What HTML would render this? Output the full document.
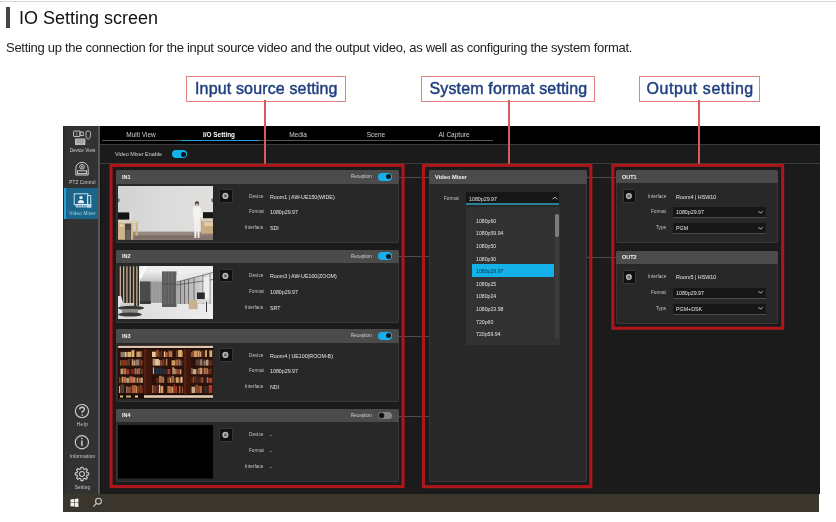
<!DOCTYPE html><html><head><meta charset="utf-8"><style>
*{box-sizing:border-box;margin:0;padding:0}
html,body{width:836px;height:522px;overflow:hidden;background:#fff;font-family:"Liberation Sans",sans-serif}
.a{position:absolute}
.t{white-space:nowrap;will-change:transform}
.co{will-change:transform;border:1.6px solid #e48080;background:#fff;height:26px;color:#1f3f7e;font-size:16px;line-height:24px;white-space:nowrap;padding-left:8px;letter-spacing:0.25px;-webkit-text-stroke:0.45px #1f3f7e}
.rl{width:1.6px;background:#d85a5a}
.pn{background:#282828;border-radius:2px;box-shadow:inset 0 0 0 0.9px #383838}
.ph{background:#4b4b4b;border-radius:2px 2px 0 0}
.hd{color:#f2f2f2;font-weight:bold;font-size:5.5px;line-height:7px}
.lb{color:#c4c4c4;font-size:4.7px;line-height:6px}
.vl{color:#e6e6e6;font-size:5.3px;line-height:6px}
.gb{background:#101010;border:1.4px solid #393939;border-radius:1.5px}
.red{border:3.2px solid #a91519}
.tg{background:#14b2ec;border-radius:5px}
.kn{background:#0d1a22;border-radius:50%}
.sbt{will-change:transform;color:#cfcfcf;font-size:4.6px;line-height:6px;text-align:center;width:35px}
</style></head><body>
<div class="a" style="left:0px;top:1px;width:836px;height:1px;background:#d6d6d6"></div>
<div class="a" style="left:6px;top:7px;width:4px;height:21px;background:#444"></div>
<div class="a t" style="left:19px;top:7px;font-size:18px;line-height:22px;color:#111">IO Setting screen</div>
<div class="a t" style="left:6px;top:39.5px;font-size:13px;line-height:16px;color:#222;letter-spacing:-0.29px">Setting up the connection for the input source video and the output video, as well as configuring the system format.</div>
<div class="a co" style="left:186px;top:75.8px;width:160px;padding-left:8px;letter-spacing:0.15px">Input source setting</div>
<div class="a co" style="left:421px;top:75.8px;width:174px;padding-left:7.5px;letter-spacing:0.15px">System format setting</div>
<div class="a co" style="left:639px;top:75.8px;width:121px;padding-left:6.5px;letter-spacing:0.55px">Output setting</div>
<div class="a" style="left:63.3px;top:126px;width:756.2px;height:386px;background:#1b1b1b"></div>
<div class="a" style="left:63.3px;top:126px;width:34.7px;height:367.6px;background:#323232;box-shadow:inset 1.5px 0 0 #272727"></div>
<div class="a" style="left:97.8px;top:126px;width:2.2px;height:367.6px;background:#565656"></div>
<div class="a" style="left:100px;top:126px;width:719.5px;height:18px;background:#000"></div>
<div class="a" style="left:100px;top:144px;width:719.5px;height:1px;background:#3b3b3b"></div>
<div class="a" style="left:100px;top:145px;width:719.5px;height:18px;background:#1b1b1b"></div>
<div class="a" style="left:100px;top:163px;width:719.5px;height:1px;background:#3b3b3b"></div>
<div class="a t" style="left:101.19999999999999px;top:131px;width:80px;text-align:center;font-size:6.5px;line-height:8px;color:#cfcfcf">Multi View</div>
<div class="a t" style="left:179.39999999999998px;top:131px;width:80px;text-align:center;font-size:6.4px;line-height:8px;color:#fff;font-weight:bold">I/O Setting</div>
<div class="a t" style="left:257.6px;top:131px;width:80px;text-align:center;font-size:6.5px;line-height:8px;color:#cfcfcf">Media</div>
<div class="a t" style="left:335.8px;top:131px;width:80px;text-align:center;font-size:6.5px;line-height:8px;color:#cfcfcf">Scene</div>
<div class="a t" style="left:414.0px;top:131px;width:80px;text-align:center;font-size:6.5px;line-height:8px;color:#cfcfcf">AI Capture</div>
<div class="a" style="left:102.3px;top:140px;width:390.5px;height:1px;background:#5a5a5a"></div>
<div class="a" style="left:180.5px;top:139.5px;width:78.3px;height:1.6px;background:#1fa3dc"></div>
<div class="a t" style="left:115.2px;top:151px;font-size:5.45px;line-height:6px;color:#d4d4d4">Video Mixer Enable</div>
<div class="a" style="left:171.7px;top:150.2px;width:15.2px;height:8.1px;background:#14b2ec;border-radius:5px"></div>
<div class="a" style="left:180.6px;top:151.6px;width:5.3px;height:5.3px;background:#06121a;border-radius:50%"></div>
<div class="a" style="left:100px;top:164px;width:719.5px;height:329.6px;background:#1b1b1b;box-shadow:inset 1px 0 0 #141414"></div>
<div class="a" style="left:63.3px;top:493.6px;width:756.2px;height:18.399999999999977px;background:#3a362d"></div>
<div class="a rl" style="left:264.2px;top:100px;height:66px"></div>
<div class="a rl" style="left:508.2px;top:100px;height:66px"></div>
<div class="a rl" style="left:698.2px;top:100px;height:66px"></div>
<div class="a" style="left:398px;top:176.6px;width:31px;height:1px;background:#4e4e4e"></div>
<div class="a" style="left:398px;top:256.2px;width:31px;height:1px;background:#4e4e4e"></div>
<div class="a" style="left:398px;top:335.9px;width:31px;height:1px;background:#4e4e4e"></div>
<div class="a" style="left:398px;top:415.5px;width:31px;height:1px;background:#4e4e4e"></div>
<div class="a" style="left:586px;top:176.6px;width:31px;height:1px;background:#4e4e4e"></div>
<div class="a" style="left:586px;top:256.8px;width:31px;height:1px;background:#4e4e4e"></div>
<div class="a pn" style="left:115.5px;top:170.0px;width:283.1px;height:73px"></div>
<div class="a ph" style="left:115.5px;top:170.0px;width:283.1px;height:13.5px"></div>
<div class="a t hd" style="left:122.2px;top:173.5px">IN1</div>
<div class="a t" style="left:351.0px;top:174.2px;font-size:4.6px;line-height:6px;color:#d0d0d0">Reception</div>
<div class="a tg" style="left:378.0px;top:172.7px;width:14.4px;height:8.1px"></div>
<div class="a kn" style="left:385.8px;top:174.1px;width:5.2px;height:5.2px;background:#06121a"></div>
<svg class="a" style="left:118.2px;top:186.2px" width="95" height="53.5" viewBox="0 0 95 53.5" preserveAspectRatio="none"><defs>
<linearGradient id="w0" x1="0" y1="0" x2="1" y2="0"><stop offset="0" stop-color="#d2d2d2"/><stop offset="0.5" stop-color="#dcdcdc"/><stop offset="1" stop-color="#e0dfdc"/></linearGradient>
<linearGradient id="f0" x1="0" y1="0" x2="0" y2="1"><stop offset="0" stop-color="#968a84"/><stop offset="1" stop-color="#7e6e64"/></linearGradient>
</defs>
<rect width="95" height="53.5" fill="url(#w0)"/>
<rect x="0" y="45.6" width="95" height="7.9" fill="url(#f0)"/>
<rect x="14" y="47.5" width="60" height="0.6" fill="#a89a90"/>
<rect x="10" y="50.5" width="70" height="0.6" fill="#6e5e54"/>
<!-- left monitor -->
<rect x="0" y="26.4" width="11.6" height="7.2" fill="#141414"/>
<rect x="11.6" y="26" width="1.6" height="8" fill="#ececec"/>
<!-- left desk -->
<rect x="0" y="34.2" width="22" height="2.5" fill="#dcd0b8"/>
<rect x="0" y="36.7" width="7" height="16.8" fill="#cdb48c"/>
<rect x="1.5" y="38.5" width="4" height="2" fill="#e8dcc8"/>
<rect x="7" y="37.5" width="6" height="16" fill="#4c4642"/>
<rect x="7.5" y="44" width="5" height="9" fill="#6a625c"/>
<rect x="13" y="36.7" width="2.2" height="16.8" fill="#d4b88a"/>
<rect x="17.5" y="36.7" width="2.2" height="13" fill="#ccb088"/>
<!-- right monitor -->
<rect x="85" y="26.2" width="10" height="6.3" fill="#161616"/>
<!-- right desk -->
<rect x="81.5" y="32.5" width="13.5" height="2.6" fill="#dccfb8"/>
<rect x="83" y="35.1" width="12" height="12.5" fill="#c8aa80"/>
<rect x="86" y="36" width="9" height="4" fill="#e0ccaa"/>
<!-- person -->
<path d="M75.2 22.3 Q75.2 19.8 78.8 19.6 Q82.6 19.8 83 22.8 L83.8 31 L81.8 31.5 L81.4 52 L79.6 52 L79 34 L78.2 52 L76.4 52 L76.2 31.5 L74.6 30.6 Z" fill="#f4f2ee"/>
<ellipse cx="79" cy="17.7" rx="2.1" ry="2.4" fill="#3a3a3a"/>
<ellipse cx="79" cy="18.8" rx="1.5" ry="1.6" fill="#d8c0a8"/>
<rect x="0" y="12.5" width="1.5" height="3.5" fill="#666"/>
<rect x="93.5" y="12.5" width="1.5" height="3.5" fill="#666"/>
</svg>
<div class="a gb" style="left:219.1px;top:189.2px;width:13.6px;height:13.6px"></div>
<svg class="a" style="left:219.1px;top:189.2px" width="14" height="14"><circle cx="6.4" cy="6.9" r="2.35" fill="#6a6a6a" stroke="#b4b4b4" stroke-width="1.5"/></svg>
<div class="a t lb" style="right:572.5px;top:193.5px">Device</div>
<div class="a t vl" style="left:269.7px;top:193.5px">Room1 | AW-UE150(WIDE)</div>
<div class="a t lb" style="right:572.5px;top:209.25px">Format</div>
<div class="a t vl" style="left:269.7px;top:209.25px">1080p29.97</div>
<div class="a t lb" style="right:572.5px;top:225.0px">Interface</div>
<div class="a t vl" style="left:269.7px;top:225.0px">SDI</div>
<div class="a pn" style="left:115.5px;top:249.6px;width:283.1px;height:73px"></div>
<div class="a ph" style="left:115.5px;top:249.6px;width:283.1px;height:13.5px"></div>
<div class="a t hd" style="left:122.2px;top:253.1px">IN2</div>
<div class="a t" style="left:351.0px;top:253.79999999999998px;font-size:4.6px;line-height:6px;color:#d0d0d0">Reception</div>
<div class="a tg" style="left:378.0px;top:252.29999999999998px;width:14.4px;height:8.1px"></div>
<div class="a kn" style="left:385.8px;top:253.7px;width:5.2px;height:5.2px;background:#06121a"></div>
<svg class="a" style="left:118.2px;top:265.8px" width="95" height="53.5" viewBox="0 0 95 53.5" preserveAspectRatio="none"><defs>
<linearGradient id="g1w" x1="0" y1="0" x2="1" y2="0"><stop offset="0" stop-color="#a8a8a8"/><stop offset="0.6" stop-color="#c8c8c8"/><stop offset="1" stop-color="#ececec"/></linearGradient>
<linearGradient id="g1f" x1="0" y1="0" x2="1" y2="0"><stop offset="0" stop-color="#d8d8d8"/><stop offset="1" stop-color="#eeeeee"/></linearGradient>
<linearGradient id="g1c" x1="0" y1="0" x2="0" y2="1"><stop offset="0" stop-color="#f2f2f2"/><stop offset="1" stop-color="#c4c4c4"/></linearGradient>
</defs>
<rect width="95" height="53.5" fill="#e6e6e6"/>
<!-- ceiling -->
<rect x="20" y="0" width="75" height="15.4" fill="#eeeeee"/>
<path d="M21.8 4 L44 6 L44 15.4 L21.8 15.4 Z" fill="url(#g1c)"/>
<path d="M26 0 L29.5 0 L23 13 L21.8 13 L21.8 9 Z" fill="#fbfbfb"/>
<!-- back wall -->
<rect x="21.8" y="15.4" width="11" height="21.5" fill="#4a4a4a"/>
<rect x="32.8" y="15.4" width="11.2" height="21.5" fill="#979797"/>
<g stroke="#b4b4b4" stroke-width="0.5"><line x1="35" y1="15.4" x2="35" y2="36.9"/><line x1="38" y1="15.4" x2="38" y2="36.9"/><line x1="41" y1="15.4" x2="41" y2="36.9"/></g>
<!-- glass wall -->
<rect x="44" y="5.4" width="14.5" height="35.5" fill="#5e5e5e"/>
<g stroke="#7a7a7a" stroke-width="0.6"><line x1="47" y1="5.4" x2="47" y2="40.9"/><line x1="50.5" y1="5.4" x2="50.5" y2="40.9"/><line x1="54" y1="5.4" x2="54" y2="40.9"/></g>
<line x1="44" y1="18" x2="58.5" y2="18" stroke="#3e3e3e" stroke-width="0.5"/>
<!-- right windows -->
<path d="M58.5 16 L95 6.5 L95 40 L58.5 40 Z" fill="url(#g1w)"/>
<path d="M58.5 9 L95 5 L95 6.5 L58.5 16 Z" fill="#e8e8e8"/>
<g stroke="#2e2e2e" stroke-width="0.55">
<line x1="58.5" y1="16" x2="95" y2="6.5"/><line x1="58.5" y1="19" x2="95" y2="13.5"/>
<line x1="62.5" y1="15" x2="62.5" y2="40"/><line x1="66.5" y1="14" x2="66.5" y2="40"/><line x1="70.5" y1="13" x2="70.5" y2="40"/><line x1="76" y1="11.5" x2="76" y2="40"/><line x1="85" y1="9" x2="85" y2="44"/><line x1="92" y1="7.5" x2="92" y2="44"/>
</g>
<rect x="85.5" y="11" width="6" height="25" fill="#eeeeee"/>
<!-- floor -->
<rect x="0" y="38" width="95" height="15.5" fill="url(#g1f)"/>
<rect x="44" y="38" width="14.5" height="3" fill="#5a5a5a"/>
<rect x="21.8" y="35" width="11" height="3" fill="#3a3a3a"/>
<!-- slats -->
<rect x="0" y="0" width="21" height="40" fill="#2c2824"/>
<g fill="#bfae94"><rect x="1.7" y="0.3" width="1.3" height="40"/><rect x="5" y="0.3" width="1.3" height="40"/><rect x="8.3" y="0.3" width="1.3" height="40"/><rect x="11.6" y="0.3" width="1.3" height="40"/><rect x="14.9" y="0.3" width="1.3" height="40"/><rect x="18.2" y="0.3" width="1.3" height="40"/></g>
<!-- chairs bottom left -->
<path d="M0 30 L3 30 L6 40 L0 42 Z" fill="#e4e4e4"/>
<rect x="2" y="37" width="14" height="4" fill="#d0d0d0"/>
<ellipse cx="13" cy="42" rx="13" ry="2.2" fill="#3a3836"/>
<rect x="4" y="43" width="16" height="4" fill="#8a8a8a"/>
<ellipse cx="12" cy="48.5" rx="12" ry="2" fill="#3a3a3a"/>
<!-- tan chair and monitor -->
<rect x="70.7" y="34.3" width="8.9" height="8.9" fill="#c8b090"/>
<rect x="79" y="26.5" width="7.8" height="6.7" fill="#2a2a2a"/>
<rect x="79" y="33.2" width="12" height="4" fill="#d8d8d8"/>
<rect x="88" y="36" width="0.9" height="10" fill="#222"/>
</svg>
<div class="a gb" style="left:219.1px;top:268.8px;width:13.6px;height:13.6px"></div>
<svg class="a" style="left:219.1px;top:268.8px" width="14" height="14"><circle cx="6.4" cy="6.9" r="2.35" fill="#6a6a6a" stroke="#b4b4b4" stroke-width="1.5"/></svg>
<div class="a t lb" style="right:572.5px;top:273.1px">Device</div>
<div class="a t vl" style="left:269.7px;top:273.1px">Room3 | AW-UE100(ZOOM)</div>
<div class="a t lb" style="right:572.5px;top:288.85px">Format</div>
<div class="a t vl" style="left:269.7px;top:288.85px">1080p29.97</div>
<div class="a t lb" style="right:572.5px;top:304.6px">Interface</div>
<div class="a t vl" style="left:269.7px;top:304.6px">SRT</div>
<div class="a pn" style="left:115.5px;top:329.2px;width:283.1px;height:73px"></div>
<div class="a ph" style="left:115.5px;top:329.2px;width:283.1px;height:13.5px"></div>
<div class="a t hd" style="left:122.2px;top:332.7px">IN3</div>
<div class="a t" style="left:351.0px;top:333.4px;font-size:4.6px;line-height:6px;color:#d0d0d0">Reception</div>
<div class="a tg" style="left:378.0px;top:331.9px;width:14.4px;height:8.1px"></div>
<div class="a kn" style="left:385.8px;top:333.3px;width:5.2px;height:5.2px;background:#06121a"></div>
<svg class="a" style="left:118.2px;top:345.4px" width="95" height="53.5" viewBox="0 0 95 53.5" preserveAspectRatio="none"><rect width="95" height="53.5" fill="#2a120a"/>
<rect x="0" y="0.8" width="95" height="2.2" fill="#d8c4b0"/>
<rect x="0" y="3" width="95" height="1" fill="#1a0a06"/>
<rect x="2.5" y="6.9" width="3.8" height="5.1" fill="#8a7a6a"/>
<rect x="6.5" y="7.0" width="2.0" height="5.0" fill="#e8c89a"/>
<rect x="8.7" y="6.9" width="0.7" height="5.1" fill="#e8c89a"/>
<rect x="9.6" y="6.8" width="3.8" height="5.2" fill="#d8b070"/>
<rect x="13.6" y="5.1" width="2.8" height="6.9" fill="#d8b070"/>
<rect x="18.4" y="6.5" width="3.8" height="5.5" fill="#d09a60"/>
<rect x="22.4" y="6.5" width="0.7" height="5.5" fill="#d8b070"/>
<rect x="23.3" y="5.9" width="0.9" height="6.1" fill="#b0643a"/>
<rect x="2.5" y="15.3" width="0.7" height="5.3" fill="#d8b070"/>
<rect x="3.4" y="15.0" width="1.6" height="5.6" fill="#7a3a20"/>
<rect x="5.2" y="15.1" width="1.6" height="5.5" fill="#a83a28"/>
<rect x="7.0" y="15.2" width="2.8" height="5.4" fill="#7a3a20"/>
<rect x="10.0" y="13.9" width="2.0" height="6.7" fill="#5a3a30"/>
<rect x="13.7" y="14.1" width="1.6" height="6.5" fill="#d09a60"/>
<rect x="15.5" y="15.6" width="1.6" height="5.0" fill="#c8a888"/>
<rect x="17.3" y="14.5" width="3.8" height="6.1" fill="#8a7a6a"/>
<rect x="21.3" y="14.2" width="1.2" height="6.4" fill="#a83a28"/>
<rect x="22.8" y="14.7" width="1.9" height="5.9" fill="#7a3a20"/>
<rect x="2.5" y="23.6" width="2.8" height="5.6" fill="#b89a80"/>
<rect x="5.5" y="23.4" width="2.8" height="5.8" fill="#c06a40"/>
<rect x="8.5" y="24.3" width="2.8" height="4.9" fill="#a83a28"/>
<rect x="12.7" y="24.0" width="3.8" height="5.2" fill="#6a2a1a"/>
<rect x="16.7" y="23.3" width="1.6" height="5.9" fill="#c06a40"/>
<rect x="18.5" y="23.7" width="1.6" height="5.5" fill="#8a7a6a"/>
<rect x="20.3" y="23.1" width="1.6" height="6.1" fill="#c06a40"/>
<rect x="22.1" y="22.4" width="1.2" height="6.8" fill="#3a2a28"/>
<rect x="23.6" y="23.9" width="0.9" height="5.3" fill="#b0643a"/>
<rect x="1.0" y="31.9" width="0.9" height="5.9" fill="#8a4a2a"/>
<rect x="2.2" y="32.9" width="1.2" height="4.9" fill="#6a2a1a"/>
<rect x="3.7" y="31.7" width="1.2" height="6.1" fill="#d8b070"/>
<rect x="5.2" y="31.8" width="2.8" height="6.0" fill="#c06a40"/>
<rect x="8.2" y="32.8" width="2.8" height="5.0" fill="#b89a80"/>
<rect x="11.2" y="31.5" width="3.8" height="6.3" fill="#c06a40"/>
<rect x="15.2" y="32.1" width="1.6" height="5.7" fill="#c8a888"/>
<rect x="17.0" y="32.5" width="1.6" height="5.3" fill="#8a4a2a"/>
<rect x="18.8" y="32.7" width="1.6" height="5.1" fill="#d09a60"/>
<rect x="20.6" y="31.7" width="0.7" height="6.1" fill="#8a4a2a"/>
<rect x="21.5" y="32.8" width="1.2" height="5.0" fill="#d8b070"/>
<rect x="23.0" y="32.6" width="1.8" height="5.2" fill="#c8a888"/>
<rect x="1.0" y="41.0" width="1.2" height="7.0" fill="#d8b070"/>
<rect x="2.5" y="39.4" width="3.8" height="8.6" fill="#5a3a30"/>
<rect x="8.3" y="41.3" width="1.2" height="6.7" fill="#b89a80"/>
<rect x="9.8" y="41.9" width="0.9" height="6.1" fill="#8a7a6a"/>
<rect x="11.0" y="41.6" width="2.0" height="6.4" fill="#a83a28"/>
<rect x="13.2" y="40.6" width="0.7" height="7.4" fill="#7a3a20"/>
<rect x="14.1" y="40.2" width="3.8" height="7.8" fill="#b0643a"/>
<rect x="18.1" y="41.1" width="1.2" height="6.9" fill="#d09a60"/>
<rect x="19.6" y="40.7" width="2.0" height="7.3" fill="#7a3a20"/>
<rect x="21.8" y="39.9" width="2.0" height="8.1" fill="#7a3a20"/>
<rect x="24.0" y="41.4" width="0.8" height="6.6" fill="#7a3a20"/>
<rect x="34.0" y="6.7" width="3.8" height="5.3" fill="#e8c89a"/>
<rect x="38.0" y="5.0" width="2.8" height="7.0" fill="#8a4a2a"/>
<rect x="41.0" y="6.7" width="1.6" height="5.3" fill="#6a2a1a"/>
<rect x="42.8" y="5.4" width="1.2" height="6.6" fill="#5a3a30"/>
<rect x="45.8" y="6.4" width="1.6" height="5.6" fill="#e8c89a"/>
<rect x="47.6" y="7.1" width="2.0" height="4.9" fill="#c06a40"/>
<rect x="49.8" y="5.7" width="1.2" height="6.3" fill="#7a3a20"/>
<rect x="51.3" y="5.5" width="0.7" height="6.5" fill="#c8a888"/>
<rect x="52.2" y="6.2" width="1.6" height="5.8" fill="#d09a60"/>
<rect x="54.0" y="5.1" width="0.7" height="6.9" fill="#7a3a20"/>
<rect x="57.9" y="5.4" width="2.0" height="6.6" fill="#5a3a30"/>
<rect x="60.1" y="5.0" width="3.8" height="7.0" fill="#d8b070"/>
<rect x="64.1" y="5.9" width="0.7" height="6.1" fill="#d09a60"/>
<rect x="34.0" y="13.7" width="0.7" height="6.9" fill="#7a3a20"/>
<rect x="34.9" y="13.7" width="2.0" height="6.9" fill="#b89a80"/>
<rect x="37.1" y="14.0" width="3.8" height="6.6" fill="#e8c89a"/>
<rect x="41.1" y="15.1" width="1.2" height="5.5" fill="#e8c89a"/>
<rect x="42.6" y="15.2" width="2.0" height="5.4" fill="#a83a28"/>
<rect x="44.8" y="13.8" width="0.9" height="6.8" fill="#8a4a2a"/>
<rect x="46.0" y="14.5" width="1.6" height="6.1" fill="#3a2a28"/>
<rect x="47.8" y="13.8" width="1.6" height="6.8" fill="#c06a40"/>
<rect x="53.6" y="15.3" width="3.8" height="5.3" fill="#d09a60"/>
<rect x="57.6" y="14.5" width="2.8" height="6.1" fill="#b0643a"/>
<rect x="60.6" y="14.5" width="2.0" height="6.1" fill="#8a7a6a"/>
<rect x="62.8" y="15.6" width="0.7" height="5.0" fill="#8a7a6a"/>
<rect x="63.7" y="15.5" width="0.7" height="5.1" fill="#7a3a20"/>
<rect x="34.9" y="22.3" width="1.2" height="6.9" fill="#d8b070"/>
<rect x="36.4" y="23.7" width="0.9" height="5.5" fill="#243040"/>
<rect x="37.6" y="23.2" width="3.8" height="6.0" fill="#243040"/>
<rect x="41.6" y="22.4" width="2.0" height="6.8" fill="#243040"/>
<rect x="43.8" y="23.4" width="0.9" height="5.8" fill="#243040"/>
<rect x="45.0" y="23.6" width="1.6" height="5.6" fill="#243040"/>
<rect x="46.8" y="23.9" width="1.6" height="5.3" fill="#243040"/>
<rect x="48.6" y="24.0" width="0.7" height="5.2" fill="#243040"/>
<rect x="49.5" y="24.0" width="2.8" height="5.2" fill="#a83a28"/>
<rect x="54.3" y="22.2" width="1.6" height="7.0" fill="#d09a60"/>
<rect x="56.1" y="23.4" width="0.9" height="5.8" fill="#b89a80"/>
<rect x="57.3" y="23.9" width="1.2" height="5.3" fill="#c8a888"/>
<rect x="58.8" y="24.3" width="2.8" height="4.9" fill="#a83a28"/>
<rect x="61.8" y="24.3" width="1.6" height="4.9" fill="#b89a80"/>
<rect x="38.0" y="32.8" width="1.2" height="5.0" fill="#6a2a1a"/>
<rect x="39.5" y="32.6" width="1.2" height="5.2" fill="#7a3a20"/>
<rect x="41.0" y="30.9" width="2.8" height="6.9" fill="#c06a40"/>
<rect x="44.0" y="31.7" width="2.0" height="6.1" fill="#8a7a6a"/>
<rect x="46.2" y="32.8" width="0.7" height="5.0" fill="#6a2a1a"/>
<rect x="48.9" y="32.4" width="0.7" height="5.4" fill="#7a3a20"/>
<rect x="49.8" y="32.3" width="0.9" height="5.5" fill="#b0643a"/>
<rect x="51.0" y="30.8" width="0.7" height="7.0" fill="#a83a28"/>
<rect x="51.9" y="32.6" width="1.2" height="5.2" fill="#d8b070"/>
<rect x="53.4" y="30.9" width="0.9" height="6.9" fill="#b0643a"/>
<rect x="54.6" y="30.9" width="0.9" height="6.9" fill="#e8c89a"/>
<rect x="55.8" y="32.5" width="2.0" height="5.3" fill="#7a3a20"/>
<rect x="58.0" y="32.3" width="2.8" height="5.5" fill="#d09a60"/>
<rect x="61.0" y="32.9" width="1.2" height="4.9" fill="#8a4a2a"/>
<rect x="62.5" y="31.8" width="2.0" height="6.0" fill="#e8c89a"/>
<rect x="34.0" y="40.3" width="1.6" height="7.7" fill="#b0643a"/>
<rect x="35.8" y="40.6" width="2.8" height="7.4" fill="#5a3a30"/>
<rect x="38.8" y="40.2" width="2.0" height="7.8" fill="#6a2a1a"/>
<rect x="41.0" y="39.8" width="1.2" height="8.2" fill="#e8c89a"/>
<rect x="42.5" y="40.9" width="2.8" height="7.1" fill="#d09a60"/>
<rect x="49.4" y="41.0" width="2.8" height="7.0" fill="#c06a40"/>
<rect x="52.4" y="41.4" width="1.2" height="6.6" fill="#d8b070"/>
<rect x="53.9" y="41.6" width="1.6" height="6.4" fill="#d09a60"/>
<rect x="55.7" y="39.5" width="1.2" height="8.5" fill="#a83a28"/>
<rect x="57.2" y="41.3" width="2.0" height="6.7" fill="#a83a28"/>
<rect x="60.9" y="40.8" width="1.6" height="7.2" fill="#b0643a"/>
<rect x="63.9" y="41.7" width="0.9" height="6.3" fill="#c06a40"/>
<rect x="73.5" y="7.1" width="0.7" height="4.9" fill="#c8a888"/>
<rect x="74.4" y="5.9" width="0.9" height="6.1" fill="#b0643a"/>
<rect x="75.6" y="5.7" width="3.8" height="6.3" fill="#d09a60"/>
<rect x="79.6" y="5.5" width="2.0" height="6.5" fill="#c8a888"/>
<rect x="81.8" y="6.5" width="1.6" height="5.5" fill="#d09a60"/>
<rect x="83.6" y="5.4" width="0.9" height="6.6" fill="#8a4a2a"/>
<rect x="84.8" y="6.2" width="2.0" height="5.8" fill="#3a2a28"/>
<rect x="87.0" y="5.2" width="2.0" height="6.8" fill="#d09a60"/>
<rect x="91.4" y="5.4" width="2.8" height="6.6" fill="#d8b070"/>
<rect x="77.7" y="14.5" width="3.8" height="6.1" fill="#5a3a30"/>
<rect x="81.7" y="14.3" width="2.8" height="6.3" fill="#8a7a6a"/>
<rect x="84.7" y="14.0" width="0.7" height="6.6" fill="#5a3a30"/>
<rect x="85.6" y="15.5" width="2.0" height="5.1" fill="#8a7a6a"/>
<rect x="87.8" y="14.7" width="2.8" height="5.9" fill="#b89a80"/>
<rect x="90.8" y="15.2" width="3.4" height="5.4" fill="#6a2a1a"/>
<rect x="73.5" y="22.9" width="0.9" height="6.3" fill="#b89a80"/>
<rect x="74.7" y="24.1" width="3.8" height="5.1" fill="#c8a888"/>
<rect x="78.7" y="24.2" width="1.2" height="5.0" fill="#7a3a20"/>
<rect x="80.2" y="23.0" width="0.9" height="6.2" fill="#b0643a"/>
<rect x="81.4" y="22.8" width="2.8" height="6.4" fill="#b89a80"/>
<rect x="84.4" y="23.3" width="0.9" height="5.9" fill="#8a4a2a"/>
<rect x="85.6" y="22.8" width="2.8" height="6.4" fill="#b0643a"/>
<rect x="88.6" y="23.2" width="1.2" height="6.0" fill="#b89a80"/>
<rect x="90.1" y="24.1" width="1.6" height="5.1" fill="#7a3a20"/>
<rect x="91.9" y="22.2" width="0.9" height="7.0" fill="#6a2a1a"/>
<rect x="93.1" y="23.3" width="0.7" height="5.9" fill="#6a2a1a"/>
<rect x="73.5" y="32.1" width="1.6" height="5.7" fill="#6a2a1a"/>
<rect x="75.3" y="31.7" width="0.9" height="6.1" fill="#b0643a"/>
<rect x="76.5" y="30.9" width="2.0" height="6.9" fill="#6a2a1a"/>
<rect x="78.7" y="31.8" width="3.8" height="6.0" fill="#3a2a28"/>
<rect x="82.7" y="32.4" width="2.8" height="5.4" fill="#a83a28"/>
<rect x="87.5" y="32.0" width="1.6" height="5.8" fill="#3a2a28"/>
<rect x="89.3" y="32.2" width="0.9" height="5.6" fill="#c8a888"/>
<rect x="90.5" y="32.9" width="3.8" height="4.9" fill="#a83a28"/>
<rect x="73.5" y="41.7" width="3.8" height="6.3" fill="#c8a888"/>
<rect x="77.5" y="39.7" width="2.8" height="8.3" fill="#8a4a2a"/>
<rect x="80.5" y="41.0" width="1.2" height="7.0" fill="#b0643a"/>
<rect x="82.0" y="41.0" width="2.0" height="7.0" fill="#b0643a"/>
<rect x="85.7" y="41.2" width="3.8" height="6.8" fill="#3a2a28"/>
<rect x="89.7" y="40.9" width="0.9" height="7.1" fill="#6a2a1a"/>
<rect x="90.9" y="40.0" width="3.3" height="8.0" fill="#a83a28"/>
<rect x="25.5" y="4" width="8" height="46" fill="#3e160c"/>
<rect x="26.5" y="4" width="1.2" height="46" fill="#6a2a18"/>
<rect x="65.5" y="4" width="7.5" height="46" fill="#3e160c"/>
<rect x="66.5" y="4" width="1.2" height="46" fill="#6a2a18"/>
<rect x="0" y="49" width="95" height="4.5" fill="#1e0c06"/>
<rect x="26" y="50.2" width="69" height="2.6" fill="#e0ccb8"/>
<rect x="2" y="50.5" width="3" height="2" fill="#d8b890"/><rect x="8" y="50.5" width="5" height="2" fill="#c8a880"/><rect x="17" y="50.5" width="3" height="2" fill="#e8d0b0"/></svg>
<div class="a gb" style="left:219.1px;top:348.4px;width:13.6px;height:13.6px"></div>
<svg class="a" style="left:219.1px;top:348.4px" width="14" height="14"><circle cx="6.4" cy="6.9" r="2.35" fill="#6a6a6a" stroke="#b4b4b4" stroke-width="1.5"/></svg>
<div class="a t lb" style="right:572.5px;top:352.7px">Device</div>
<div class="a t vl" style="left:269.7px;top:352.7px">Room4 | UE100(ROOM-B)</div>
<div class="a t lb" style="right:572.5px;top:368.45px">Format</div>
<div class="a t vl" style="left:269.7px;top:368.45px">1080p29.97</div>
<div class="a t lb" style="right:572.5px;top:384.2px">Interface</div>
<div class="a t vl" style="left:269.7px;top:384.2px">NDI</div>
<div class="a pn" style="left:115.5px;top:408.79999999999995px;width:283.1px;height:73px"></div>
<div class="a ph" style="left:115.5px;top:408.79999999999995px;width:283.1px;height:13.5px"></div>
<div class="a t hd" style="left:122.2px;top:412.29999999999995px">IN4</div>
<div class="a t" style="left:351.0px;top:412.99999999999994px;font-size:4.6px;line-height:6px;color:#d0d0d0">Reception</div>
<div class="a" style="left:377.7px;top:411.69999999999993px;width:14.6px;height:7.6px;background:#858585;border-radius:5px"></div>
<div class="a kn" style="left:378.6px;top:412.49999999999994px;width:5.6px;height:5.6px;background:#0e0e0e;box-shadow:0 0 0 0.5px #555"></div>
<svg class="a" style="left:118.2px;top:424.99999999999994px" width="95" height="53.5" viewBox="0 0 95 53.5" preserveAspectRatio="none"><rect width="95" height="53.5" fill="#000"/></svg>
<div class="a gb" style="left:219.1px;top:427.99999999999994px;width:13.6px;height:13.6px"></div>
<svg class="a" style="left:219.1px;top:427.99999999999994px" width="14" height="14"><circle cx="6.4" cy="6.9" r="2.35" fill="#6a6a6a" stroke="#b4b4b4" stroke-width="1.5"/></svg>
<div class="a t lb" style="right:572.5px;top:432.29999999999995px">Device</div>
<div class="a t vl" style="left:269.7px;top:432.29999999999995px">-</div>
<div class="a t lb" style="right:572.5px;top:448.04999999999995px">Format</div>
<div class="a t vl" style="left:269.7px;top:448.04999999999995px">-</div>
<div class="a t lb" style="right:572.5px;top:463.79999999999995px">Interface</div>
<div class="a t vl" style="left:269.7px;top:463.79999999999995px">-</div>
<svg class="a" style="left:0;top:0" width="836" height="522"><rect x="111.05" y="165.35" width="292.00" height="321.20" fill="none" stroke="#ad161a" stroke-width="3.1"/><rect x="423.45" y="165.35" width="167.40" height="321.30" fill="none" stroke="#ad161a" stroke-width="3.1"/><rect x="612.85" y="165.35" width="169.80" height="162.90" fill="none" stroke="#ad161a" stroke-width="3.1"/></svg>
<div class="a pn" style="left:428.7px;top:170px;width:158px;height:311.6px"></div>
<div class="a ph" style="left:428.7px;top:170px;width:158px;height:14px"></div>
<div class="a t hd" style="left:434.7px;top:173.8px;font-size:5.7px">Video Mixer</div>
<div class="a t lb" style="right:376.8px;top:195.6px">Format</div>
<div class="a" style="left:466.3px;top:192.2px;width:93.2px;height:11px;background:#171717"></div>
<div class="a" style="left:466.3px;top:202.6px;width:93.2px;height:2.6px;background:#2a8296"></div>
<div class="a t vl" style="left:469px;top:195.5px;font-size:5.3px">1080p29.97</div>
<svg class="a" style="left:551px;top:195px" width="8" height="6"><path d="M1.5 4.3 L3.8 2 L6.1 4.3" stroke="#cfcfcf" stroke-width="0.9" fill="none"/></svg>
<div class="a" style="left:465.5px;top:207px;width:94px;height:138px;background:#323232;border-radius:1px"></div>
<div class="a" style="left:472px;top:264.1px;width:82px;height:12.6px;background:#15b2ea"></div>
<div class="a t" style="left:475.5px;top:217.7px;font-size:5.2px;line-height:6px;color:#e0e0e0">1080p60</div>
<div class="a t" style="left:475.5px;top:230.29999999999998px;font-size:5.2px;line-height:6px;color:#e0e0e0">1080p59.94</div>
<div class="a t" style="left:475.5px;top:242.89999999999998px;font-size:5.2px;line-height:6px;color:#e0e0e0">1080p50</div>
<div class="a t" style="left:475.5px;top:255.5px;font-size:5.2px;line-height:6px;color:#e0e0e0">1080p30</div>
<div class="a t" style="left:475.5px;top:268.09999999999997px;font-size:5.2px;line-height:6px;color:#0c2a3a">1080p29.97</div>
<div class="a t" style="left:475.5px;top:280.7px;font-size:5.2px;line-height:6px;color:#e0e0e0">1080p25</div>
<div class="a t" style="left:475.5px;top:293.29999999999995px;font-size:5.2px;line-height:6px;color:#e0e0e0">1080p24</div>
<div class="a t" style="left:475.5px;top:305.9px;font-size:5.2px;line-height:6px;color:#e0e0e0">1080p23.98</div>
<div class="a t" style="left:475.5px;top:318.5px;font-size:5.2px;line-height:6px;color:#e0e0e0">720p60</div>
<div class="a t" style="left:475.5px;top:331.09999999999997px;font-size:5.2px;line-height:6px;color:#e0e0e0">720p59.94</div>
<div class="a" style="left:555.2px;top:213.6px;width:3.5px;height:125.5px;background:#3c3c3c;border-radius:1.5px"></div>
<div class="a" style="left:555.3px;top:213.8px;width:3.3px;height:23.5px;background:#7c7c7c;border-radius:1.5px"></div>
<div class="a pn" style="left:616.2px;top:170.3px;width:162.1px;height:73.1px"></div>
<div class="a ph" style="left:616.2px;top:170.3px;width:162.1px;height:13px"></div>
<div class="a t hd" style="left:622.2px;top:173.60000000000002px">OUT1</div>
<div class="a gb" style="left:622.7px;top:189.10000000000002px;width:13.1px;height:13.8px"></div>
<svg class="a" style="left:622.7px;top:189.10000000000002px" width="14" height="14"><circle cx="5.9" cy="7.1" r="2.3" fill="#6a6a6a" stroke="#b4b4b4" stroke-width="1.5"/></svg>
<div class="a t lb" style="right:169.79999999999995px;top:193.60000000000002px">Interface</div>
<div class="a t vl" style="left:675.7px;top:193.60000000000002px;font-size:5.4px">Room4 | HSW10</div>
<div class="a t lb" style="right:169.79999999999995px;top:209.0px">Format</div>
<div class="a" style="left:673.1px;top:206.8px;width:92.5px;height:10px;background:#171717"></div>
<div class="a" style="left:673.1px;top:216.8px;width:92.5px;height:0.8px;background:#4a4a4a"></div>
<div class="a t vl" style="left:675.7px;top:209.0px">1080p29.97</div>
<svg class="a" style="left:757.2px;top:209.5px" width="7" height="5"><path d="M1.5 1.2 L3.5 3.2 L5.5 1.2" stroke="#cfcfcf" stroke-width="0.9" fill="none"/></svg>
<div class="a t lb" style="right:169.79999999999995px;top:225.1px">Type</div>
<div class="a" style="left:673.1px;top:222.9px;width:92.5px;height:10px;background:#171717"></div>
<div class="a" style="left:673.1px;top:232.9px;width:92.5px;height:0.8px;background:#4a4a4a"></div>
<div class="a t vl" style="left:675.7px;top:225.1px">PGM</div>
<svg class="a" style="left:757.2px;top:225.6px" width="7" height="5"><path d="M1.5 1.2 L3.5 3.2 L5.5 1.2" stroke="#cfcfcf" stroke-width="0.9" fill="none"/></svg>
<div class="a pn" style="left:616.2px;top:251.10000000000002px;width:162.1px;height:73.1px"></div>
<div class="a ph" style="left:616.2px;top:251.10000000000002px;width:162.1px;height:13px"></div>
<div class="a t hd" style="left:622.2px;top:254.40000000000003px">OUT2</div>
<div class="a gb" style="left:622.7px;top:269.90000000000003px;width:13.1px;height:13.8px"></div>
<svg class="a" style="left:622.7px;top:269.90000000000003px" width="14" height="14"><circle cx="5.9" cy="7.1" r="2.3" fill="#6a6a6a" stroke="#b4b4b4" stroke-width="1.5"/></svg>
<div class="a t lb" style="right:169.79999999999995px;top:274.40000000000003px">Interface</div>
<div class="a t vl" style="left:675.7px;top:274.40000000000003px;font-size:5.4px">Room5 | HSW10</div>
<div class="a t lb" style="right:169.79999999999995px;top:289.8px">Format</div>
<div class="a" style="left:673.1px;top:287.6px;width:92.5px;height:10px;background:#171717"></div>
<div class="a" style="left:673.1px;top:297.6px;width:92.5px;height:0.8px;background:#4a4a4a"></div>
<div class="a t vl" style="left:675.7px;top:289.8px">1080p29.97</div>
<svg class="a" style="left:757.2px;top:290.3px" width="7" height="5"><path d="M1.5 1.2 L3.5 3.2 L5.5 1.2" stroke="#cfcfcf" stroke-width="0.9" fill="none"/></svg>
<div class="a t lb" style="right:169.79999999999995px;top:305.90000000000003px">Type</div>
<div class="a" style="left:673.1px;top:303.70000000000005px;width:92.5px;height:10px;background:#171717"></div>
<div class="a" style="left:673.1px;top:313.70000000000005px;width:92.5px;height:0.8px;background:#4a4a4a"></div>
<div class="a t vl" style="left:675.7px;top:305.90000000000003px">PGM+DSK</div>
<svg class="a" style="left:757.2px;top:306.40000000000003px" width="7" height="5"><path d="M1.5 1.2 L3.5 3.2 L5.5 1.2" stroke="#cfcfcf" stroke-width="0.9" fill="none"/></svg>
<div class="a" style="left:63.8px;top:188px;width:34px;height:31.2px;background:#19668a"></div>
<div class="a" style="left:63.8px;top:188px;width:2.7px;height:31.2px;background:#2aa0d8"></div>
<div class="a t sbt" style="left:64.92500000000001px;top:148.3px;letter-spacing:0.05px;">Device View</div>
<div class="a t sbt" style="left:64.97500000000001px;top:179.5px;letter-spacing:0.15px;">PTZ Control</div>
<div class="a t sbt" style="left:65.0px;top:211.2px;letter-spacing:0.2px;color:#a9d3e6;">Video Mixer</div>
<div class="a t sbt" style="left:65.15px;top:422.4px;letter-spacing:0.5px;">Help</div>
<div class="a t sbt" style="left:65.01px;top:453.9px;letter-spacing:0.22px;">Information</div>
<div class="a t sbt" style="left:65.0px;top:484.6px;letter-spacing:0.2px;">Setting</div>
<svg class="a" style="left:0;top:0" width="836" height="522" viewBox="0 0 836 522">
<g fill="none" stroke="#c8c8c8" stroke-width="0.9">
  <!-- device view -->
  <rect x="73.6" y="131" width="6.4" height="5.5" rx="0.4"/>
  <rect x="80" y="132" width="3.2" height="3.6"/>
  <line x1="76.8" y1="131.3" x2="76.8" y2="136.2" stroke-width="0.5"/>
  <path d="M86 132.4 Q86 131 88.2 131 Q90.5 131 90.5 132.4 L90.5 135.5 Q90.5 138 88.2 139.6 Q86 138 86 135.5 Z"/>

</g>
<rect x="75" y="138.5" width="10.4" height="6.6" fill="#bdbdbd" rx="0.5"/>
<g stroke="#7a7a7a" stroke-width="0.45">
  <line x1="76" y1="140.3" x2="84.4" y2="140.3"/>
  <line x1="76" y1="142.3" x2="84.4" y2="142.3"/>
  <line x1="78" y1="139.3" x2="78" y2="144.3"/>
  <line x1="80.2" y1="139.3" x2="80.2" y2="144.3"/>
  <line x1="82.4" y1="139.3" x2="82.4" y2="144.3"/>
</g>
<!-- PTZ -->
<g fill="none" stroke="#cfcfcf" stroke-width="1">
  <path d="M75.8 175 L75.8 168.5 A6.2 6.2 0 0 1 88.2 168.5 L88.2 175 Z"/>
  <circle cx="82" cy="166.8" r="2.3"/>
  <rect x="77.4" y="170.8" width="9.2" height="2.8"/>
</g>
<circle cx="82" cy="166.8" r="0.9" fill="#cfcfcf"/>
<!-- video mixer -->
<g fill="none" stroke="#d6ecf5" stroke-width="0.9">
  <rect x="74.2" y="193.8" width="13.6" height="10.8"/>
  <rect x="87.6" y="195.6" width="3.2" height="11.3"/>
  <rect x="76.2" y="204.6" width="14.6" height="2.3"/>
</g>
<circle cx="81" cy="197.6" r="1.7" fill="#e2f2f8"/>
<path d="M77.9 203.2 Q77.9 199.9 81 199.9 Q84.1 199.9 84.1 203.2 Z" fill="#e2f2f8"/>
<rect x="77.2" y="205.2" width="13" height="1.2" fill="#d6ecf5"/>
<g fill="#1a6888">
  <rect x="78" y="205.4" width="1.4" height="0.9"/><rect x="80.5" y="205.4" width="1.4" height="0.9"/><rect x="83" y="205.4" width="1.4" height="0.9"/><rect x="85.5" y="205.4" width="1.4" height="0.9"/>
  <rect x="88.6" y="197" width="1.2" height="1.3"/><rect x="88.6" y="199.6" width="1.2" height="1.3"/><rect x="88.6" y="202.2" width="1.2" height="1.3"/>
</g>
<!-- help -->
<g fill="none" stroke="#cdcdcd" stroke-width="1.15">
  <circle cx="82" cy="411.1" r="6.6"/>
  <path d="M79.7 409.5 Q79.7 407.2 82 407.2 Q84.4 407.2 84.4 409.3 Q84.4 410.9 82.2 411.8 L82.2 413.1" stroke-width="1.4"/>
</g>
<circle cx="82.2" cy="415.1" r="0.8" fill="#cdcdcd"/>
<!-- info -->
<g fill="none" stroke="#cdcdcd" stroke-width="1.15">
  <circle cx="81.9" cy="442.2" r="6.6"/>
  <line x1="81.9" y1="440.5" x2="81.9" y2="446.1" stroke-width="1.5"/>
</g>
<circle cx="81.9" cy="438.5" r="0.85" fill="#cdcdcd"/>
<!-- setting gear -->
<g transform="translate(82 473.9)">
  <path fill="none" stroke="#d0d0d0" stroke-width="1.05" stroke-linejoin="round" d="M-1.06 -6.72 L1.06 -6.72 L1.24 -4.84 L2.55 -4.30 L4.00 -5.50 L5.50 -4.00 L4.30 -2.55 L4.84 -1.24 L6.72 -1.06 L6.72 1.06 L4.84 1.24 L4.30 2.55 L5.50 4.00 L4.00 5.50 L2.55 4.30 L1.24 4.84 L1.06 6.72 L-1.06 6.72 L-1.24 4.84 L-2.55 4.30 L-4.00 5.50 L-5.50 4.00 L-4.30 2.55 L-4.84 1.24 L-6.72 1.06 L-6.72 -1.06 L-4.84 -1.24 L-4.30 -2.55 L-5.50 -4.00 L-4.00 -5.50 L-2.55 -4.30 L-1.24 -4.84 Z"/>
  <circle r="2.5" fill="none" stroke="#d0d0d0" stroke-width="1.05"/>
</g>
<!-- windows logo -->
<path d="M70.5 499.5 L74 499.0 L74 502.5 L70.5 502.5 Z M74.6 498.9 L78.4 498.5 L78.4 502.5 L74.6 502.5 Z M70.5 503.1 L74 503.1 L74 506.6 L70.5 506.2 Z M74.6 503.1 L78.4 503.1 L78.4 507.1 L74.6 506.7 Z" fill="#f2f2f2"/>
<!-- search -->
<g fill="none" stroke="#c8c8c8" stroke-width="1.1">
  <circle cx="98.5" cy="501.2" r="2.9"/>
  <line x1="96.4" y1="503.4" x2="93.4" y2="506.6" stroke-width="1.2"/>
</g>
</svg>

</body></html>
